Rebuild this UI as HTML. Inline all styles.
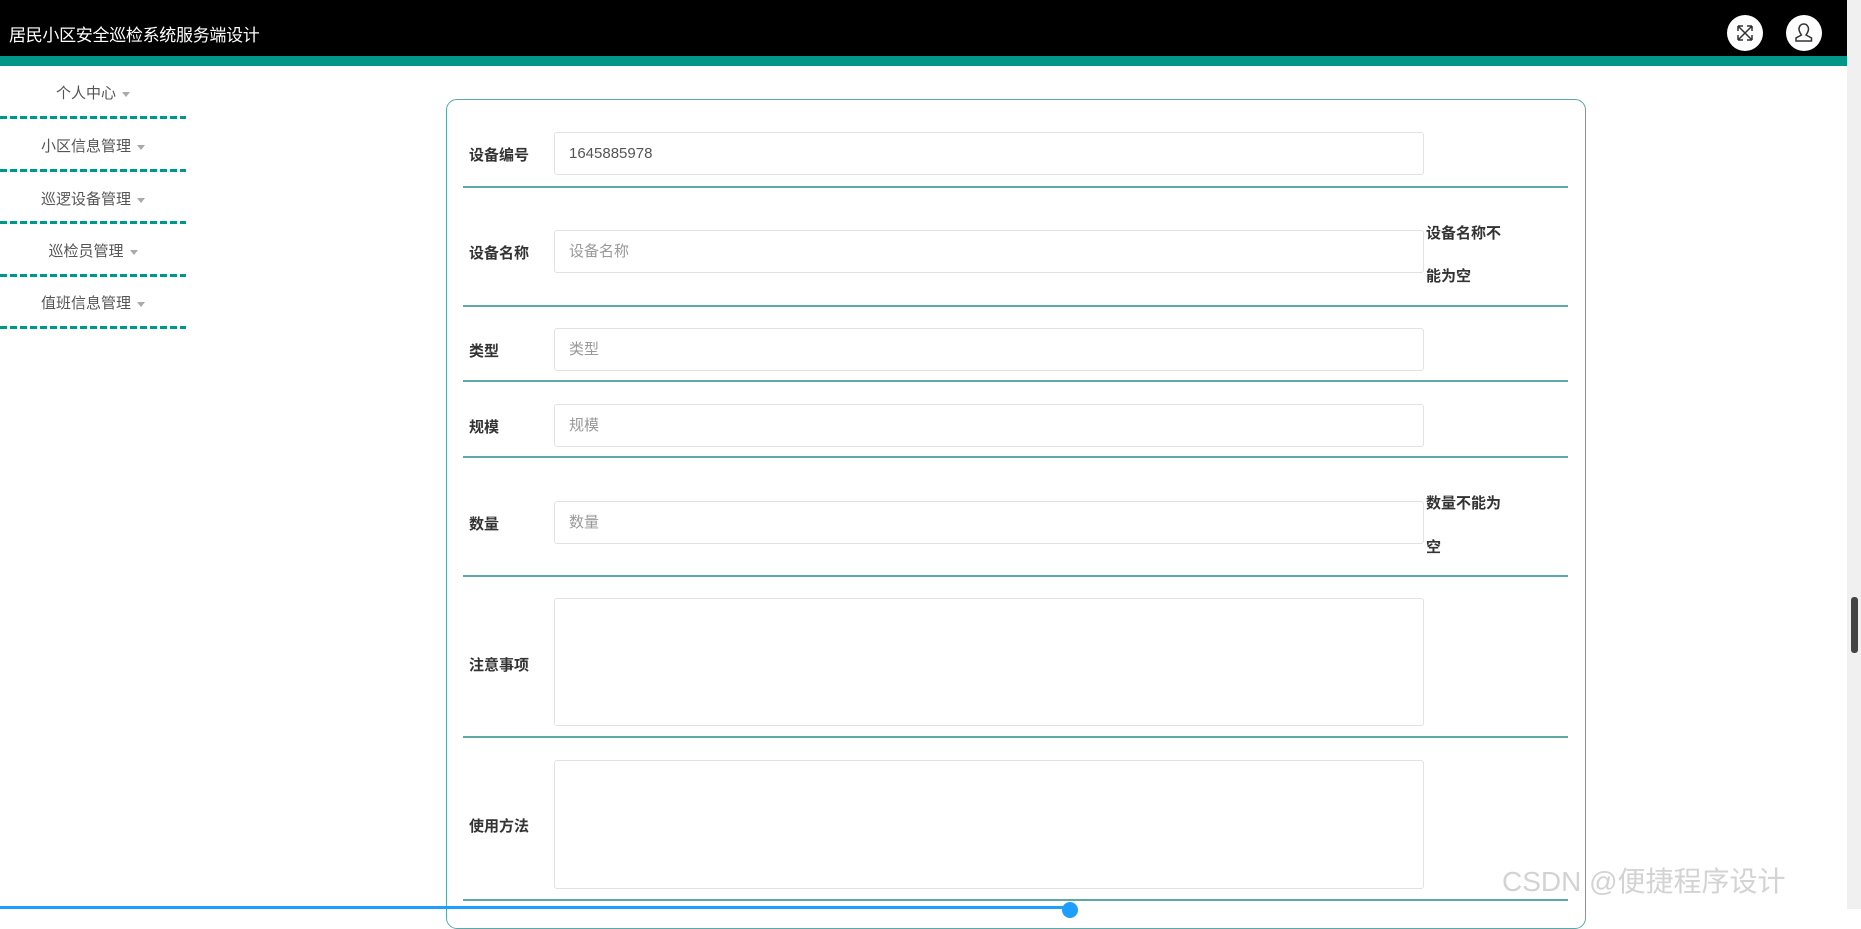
<!DOCTYPE html>
<html><head><meta charset="utf-8"><style>
*{margin:0;padding:0;box-sizing:border-box}
body{width:1861px;height:909px;overflow:hidden;background:#fff;font-family:"Liberation Sans","Noto Sans CJK SC",sans-serif;position:relative}
.hd{position:absolute;left:0;top:0;width:1847px;height:56px;background:#000}
.tl{position:absolute;left:0;top:56px;width:1847px;height:10px;background:#009688}
.title{position:absolute;left:9px;top:21px;color:#fff;font-size:17px;letter-spacing:-0.3px}
.ic{position:absolute;top:15px;width:36px;height:36px;border-radius:50%;background:#fff}
.sb{position:absolute;left:1847px;top:0;width:14px;height:909px;background:#f0f0f0}
.thumb{position:absolute;left:1851px;top:597px;width:7px;height:56px;background:#444;border-radius:3px}
.nav{position:absolute;left:0;width:186px;text-align:center;font-size:15px;color:#555}
.nav span{display:inline-block;border-left:4px solid transparent;border-right:4px solid transparent;border-top:5px solid #aaa;margin-left:6px;vertical-align:middle}
.dash{position:absolute;left:0;width:186px;height:3px;background:repeating-linear-gradient(90deg,#009688 0 7px,transparent 7px 10px)}
.panel{position:absolute;left:446px;top:99px;width:1140px;height:830px;border:1px solid #5aa8a8;border-radius:11px}
.lab{position:absolute;left:469px;font-size:15px;font-weight:bold;color:#333}
.in{position:absolute;left:554px;width:870px;border:1px solid #e2e2e2;border-radius:3px;font-size:15px;color:#999;padding-left:14px}
.line{position:absolute;left:463px;width:1105px;height:2px;background:#5fa8a8}
.err{position:absolute;left:1426px;font-size:15px;font-weight:bold;color:#333}
</style></head><body>
<div class="hd"></div><div class="tl"></div>
<div class="title">居民小区安全巡检系统服务端设计</div>
<div class="ic" style="left:1727px"><svg width="36" height="36" viewBox="0 0 36 36" fill="none" stroke="#333" stroke-width="1.5"><path d="M11 11L25 25M25 11L11 25M11 11h5M11 11v5M25 11h-5M25 11v5M11 25h5M11 25v-5M25 25h-5M25 25v-5"/></svg></div>
<div class="ic" style="left:1786px"><svg width="36" height="36" viewBox="0 0 36 36" fill="none" stroke="#333" stroke-width="1.5"><path d="M18 9a4.5 5 0 0 1 4.5 5c0 3-2 5-2.5 6l5.5 3v3H10v-3l5.5-3c-.5-1-2.5-3-2.5-6A4.5 5 0 0 1 18 9z"/></svg></div>
<div class="sb"></div><div class="thumb"></div>
<div class="nav" style="top:82px">个人中心<span></span></div><div class="dash" style="top:116px"></div>
<div class="nav" style="top:135px">小区信息管理<span></span></div><div class="dash" style="top:169px"></div>
<div class="nav" style="top:188px">巡逻设备管理<span></span></div><div class="dash" style="top:221px"></div>
<div class="nav" style="top:240px">巡检员管理<span></span></div><div class="dash" style="top:274px"></div>
<div class="nav" style="top:292px">值班信息管理<span></span></div><div class="dash" style="top:326px"></div>
<div class="panel"></div>
<div class="lab" style="top:144px">设备编号</div><div class="in" style="top:132px;height:43px;line-height:41px;color:#555">1645885978</div><div class="line" style="top:186px"></div>
<div class="lab" style="top:242px">设备名称</div><div class="in" style="top:230px;height:43px;line-height:41px">设备名称</div>
<div class="err" style="top:222px">设备名称不</div><div class="err" style="top:265px">能为空</div><div class="line" style="top:305px"></div>
<div class="lab" style="top:340px">类型</div><div class="in" style="top:328px;height:43px;line-height:41px">类型</div><div class="line" style="top:380px"></div>
<div class="lab" style="top:416px">规模</div><div class="in" style="top:404px;height:43px;line-height:41px">规模</div><div class="line" style="top:456px"></div>
<div class="lab" style="top:513px">数量</div><div class="in" style="top:501px;height:43px;line-height:41px">数量</div>
<div class="err" style="top:492px">数量不能为</div><div class="err" style="top:536px">空</div><div class="line" style="top:575px"></div>
<div class="lab" style="top:654px">注意事项</div><div class="in" style="top:598px;height:128px"></div><div class="line" style="top:736px"></div>
<div class="lab" style="top:815px">使用方法</div><div class="in" style="top:760px;height:129px"></div><div class="line" style="top:899px"></div>
<div style="position:absolute;left:0;top:906px;width:1068px;height:3px;background:#1e9fff"></div>
<div style="position:absolute;left:1062px;top:902px;width:16px;height:16px;border-radius:50%;background:#1e9fff"></div>
<div style="position:absolute;left:1502px;top:860px;font-size:28px;color:rgba(200,200,200,.8)">CSDN @便捷程序设计</div>
</body></html>
